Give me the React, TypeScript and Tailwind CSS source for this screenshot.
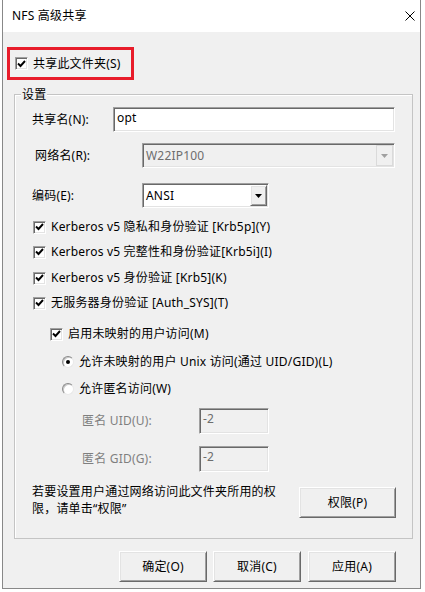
import type { ReactNode } from "react"

const sunken =
  "border border-t-[#a0a0a0] border-l-[#a0a0a0] border-r-white border-b-white shadow-[inset_1px_1px_0_#696969,inset_-1px_-1px_0_#e3e3e3]"
const raised =
  "border border-t-white border-l-white border-r-[#696969] border-b-[#696969] shadow-[inset_1px_1px_0_#e3e3e3,inset_-1px_-1px_0_#a0a0a0]"

function CheckBox({ checked = true }: { checked?: boolean }) {
  return (
    <span className={`${sunken} flex h-[13px] w-[13px] shrink-0 items-center justify-center bg-white`}>
      {checked && (
        <svg width="9" height="8" viewBox="0 0 9 8">
          <polyline points="1,3.5 3.5,6 8,1" fill="none" stroke="#000" strokeWidth="1.9" />
        </svg>
      )}
    </span>
  )
}

function Radio({ checked }: { checked?: boolean }) {
  return (
    <span className="flex h-[12px] w-[12px] shrink-0 items-center justify-center rounded-full border border-t-[#8a8a8a] border-l-[#8a8a8a] border-r-[#e8e8e8] border-b-[#e8e8e8] bg-white shadow-[inset_1px_1px_0_#c8c8c8]">
      {checked && <span className="h-[4px] w-[4px] rounded-full bg-black" />}
    </span>
  )
}

function CheckRow({ children, className = "" }: { children: ReactNode; className?: string }) {
  return (
    <div className={`flex h-[18px] items-center gap-[5px] leading-[18px] ${className}`}>
      <CheckBox />
      <span>{children}</span>
    </div>
  )
}

function Button({ children, className = "" }: { children: ReactNode; className?: string }) {
  return (
    <button className={`${raised} flex h-[31px] w-[88px] items-center justify-center bg-[#f0f0f0] text-black ${className}`}>
      {children}
    </button>
  )
}

function Combo({ value, disabled, className = "" }: { value: string; disabled?: boolean; className?: string }) {
  return (
    <div className={`${sunken} flex h-full items-center ${disabled ? "bg-[#f0f0f0] text-[#6d6d6d]" : "bg-white text-black"} ${className}`}>
      <span className="flex-1 pl-[3px]">{value}</span>
      <span
        className={`mr-[1px] flex h-[21px] w-[17px] items-center justify-center bg-[#f0f0f0] ${
          disabled ? "border border-[#dadada]" : raised
        }`}
      >
        <svg width="7" height="4" viewBox="0 0 7 4">
          <polygon points="0,0 7,0 3.5,4" fill={disabled ? "#a0a0a0" : "#000"} />
        </svg>
      </span>
    </div>
  )
}

export default function App() {
  return (
    <div className="h-[592px] w-[425px] overflow-hidden bg-white pl-[2px] font-['Noto_Sans','Noto_Sans_CJK_SC',sans-serif] text-[12px] tracking-[0.2px] text-black">
      <div className="flex h-[589px] w-[419px] flex-col border-x border-b border-[#888888]">
        <div className="flex h-[32px] shrink-0 items-center justify-between bg-white pl-[9px] pr-[5px]">
          <span>NFS 高级共享</span>
          <svg width="10" height="10" viewBox="0 0 10 10">
            <path d="M0.5 0.5 L9.5 9.5 M9.5 0.5 L0.5 9.5" stroke="#000" strokeWidth="1" />
          </svg>
        </div>

        <div className="flex-1 bg-[#f0f0f0]">
          <div className="ml-[4px] mt-[15px] flex h-[33px] w-[127px] items-center gap-[5px] border-[3px] border-[#e81c2a] pl-[5px]">
            <CheckBox />
            <span>共享此文件夹(S)</span>
          </div>

          <div className="relative ml-[11px] mt-[14px] h-[445px] w-[399px] border border-[#c4c4c4] pl-[17px] shadow-[inset_1px_1px_0_#ffffff]">
            <span className="absolute left-[6px] top-[-9px] bg-[#f0f0f0] px-[1px] leading-[17px]">设置</span>

            <div className="mt-[12px] flex h-[25px] items-center">
              <span className="w-[81px]">共享名(N):</span>
              <div className={`${sunken} h-full w-[282px] bg-white pl-[3px] pt-[1px] leading-[18px]`}>opt</div>
            </div>

            <div className="mt-[11px] flex h-[25px] items-center">
              <span className="w-[110px] pl-[3px]">网络名(R):</span>
              <Combo value="W22IP100" disabled className="w-[253px]" />
            </div>

            <div className="mt-[15px] flex h-[25px] items-center">
              <span className="w-[110px]">编码(E):</span>
              <Combo value="ANSI" className="w-[127px]" />
            </div>

            <CheckRow className="ml-[1px] mt-[10px]">Kerberos v5 隐私和身份验证 [Krb5p](Y)</CheckRow>
            <CheckRow className="ml-[1px] mt-[7px]">Kerberos v5 完整性和身份验证[Krb5i](I)</CheckRow>
            <CheckRow className="ml-[1px] mt-[8px]">Kerberos v5 身份验证 [Krb5](K)</CheckRow>
            <CheckRow className="ml-[1px] mt-[7px]">无服务器身份验证 [Auth_SYS](T)</CheckRow>
            <CheckRow className="ml-[18px] mt-[13px]">启用未映射的用户访问(M)</CheckRow>

            <div className="ml-[30px] mt-[10px] flex h-[18px] items-center gap-[5px] leading-[18px]">
              <Radio checked />
              <span>允许未映射的用户 Unix 访问(通过 UID/GID)(L)</span>
            </div>
            <div className="ml-[30px] mt-[9px] flex h-[18px] items-center gap-[5px] leading-[18px]">
              <Radio />
              <span>允许匿名访问(W)</span>
            </div>

            <div className="ml-[50px] mt-[10px] flex h-[26px] items-center">
              <span className="w-[117px] text-[#7f7f7f]">匿名 UID(U):</span>
              <div className={`${sunken} h-full w-[70px] bg-[#f0f0f0] pl-[3px] pt-[1px] leading-[18px] text-[#6d6d6d]`}>-2</div>
            </div>
            <div className="ml-[50px] mt-[12px] flex h-[26px] items-center">
              <span className="w-[117px] text-[#7f7f7f]">匿名 GID(G):</span>
              <div className={`${sunken} h-full w-[70px] bg-[#f0f0f0] pl-[3px] pt-[1px] leading-[18px] text-[#6d6d6d]`}>-2</div>
            </div>

            <div className="mt-[15px] flex items-start">
              <p className="-mt-[4px] w-[249px] leading-[17px]">若要设置用户通过网络访问此文件夹所用的权限，请单击“权限”</p>
              <Button className="ml-[18px] w-[97px]">权限(P)</Button>
            </div>
          </div>

          <div className="ml-[116px] mt-[12px] flex">
            <Button>确定(O)</Button>
            <Button className="ml-[6px]">取消(C)</Button>
            <Button className="ml-[7px]">应用(A)</Button>
          </div>
        </div>
      </div>
    </div>
  )
}
